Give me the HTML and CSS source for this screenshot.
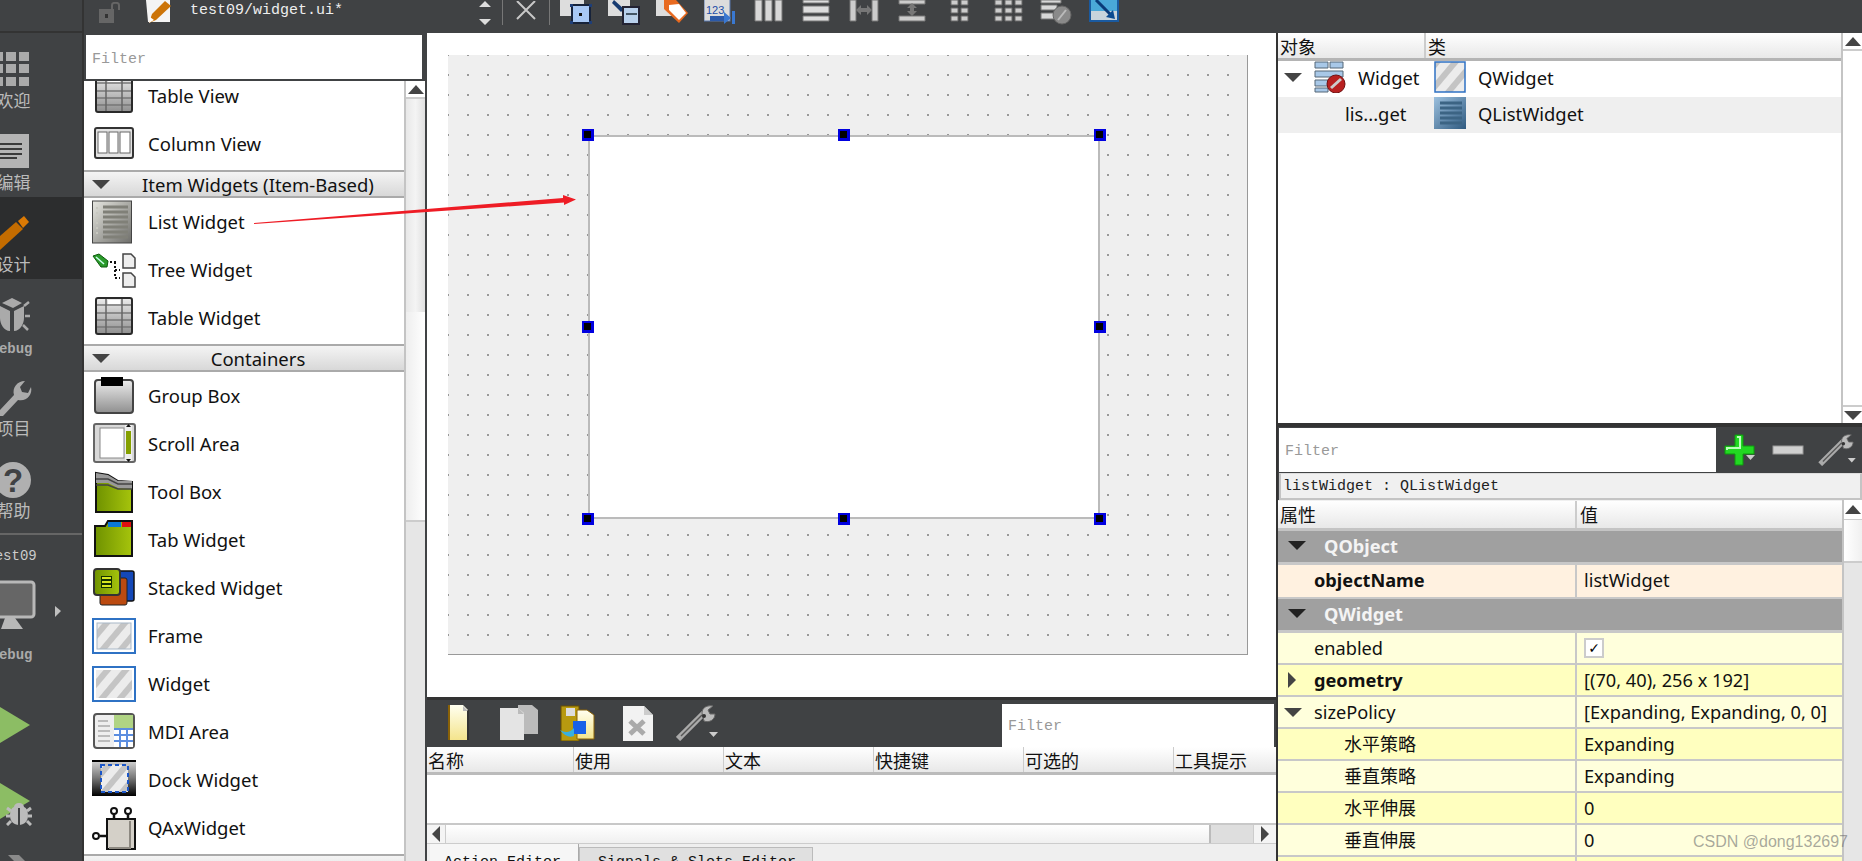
FILE: index.html
```html
<!DOCTYPE html>
<html lang="zh">
<head>
<meta charset="utf-8">
<title>Qt Designer</title>
<link rel="stylesheet" href="styles.css">
</head>
<body>
<svg class="defs" width="0" height="0">
  <defs>
    <linearGradient id="gGray" x1="0" y1="0" x2="0" y2="1"><stop offset="0" stop-color="#ececec"/><stop offset="1" stop-color="#8f8f8f"/></linearGradient>
    <linearGradient id="gList" x1="0" y1="0" x2="1" y2="1"><stop offset="0" stop-color="#e6e6e0"/><stop offset="1" stop-color="#6e6e6a"/></linearGradient>
    <linearGradient id="gGreen" x1="0" y1="0" x2="1" y2="0"><stop offset="0" stop-color="#6f9200"/><stop offset="1" stop-color="#a6c40c"/></linearGradient>
    <linearGradient id="gDock" x1="0" y1="0" x2="0" y2="1"><stop offset="0" stop-color="#d8d8d8"/><stop offset=".5" stop-color="#777"/><stop offset="1" stop-color="#000"/></linearGradient>
    <linearGradient id="gBlue" x1="0" y1="0" x2="1" y2="1"><stop offset="0" stop-color="#9cc0de"/><stop offset="1" stop-color="#2f5a80"/></linearGradient>
    <linearGradient id="gDoc" x1="0" y1="0" x2="0" y2="1"><stop offset="0" stop-color="#fffff0"/><stop offset="1" stop-color="#f4e48c"/></linearGradient>
    <pattern id="hatch" width="14" height="14" patternUnits="userSpaceOnUse" patternTransform="rotate(40)"><rect width="14" height="14" fill="#ececec"/><rect width="6" height="14" fill="#c4c4c4"/></pattern>

    <symbol id="i-table" viewBox="0 0 44 44"><rect x="4" y="2" width="36" height="36" rx="2" fill="url(#gGray)" stroke="#2a2a2a" stroke-width="2"/><path d="M5 9h34M5 17h34M5 24h34M5 31h34" stroke="#777" stroke-width="1.5"/><path d="M14 3v34M30 3v34" stroke="#666" stroke-width="1.5"/><rect x="16" y="4" width="12" height="4" fill="#fff"/></symbol>
    <symbol id="i-column" viewBox="0 0 44 44"><rect x="3" y="6" width="38" height="30" rx="2" fill="#e4e4e4" stroke="#333" stroke-width="2"/><rect x="6" y="10" width="9" height="21" fill="#fff" stroke="#666"/><rect x="17" y="10" width="9" height="21" fill="#fff" stroke="#666"/><rect x="28" y="10" width="10" height="21" fill="#fff" stroke="#666"/></symbol>
    <symbol id="i-list" viewBox="0 0 44 44"><rect x="0.5" y="1" width="39" height="42" fill="url(#gList)" stroke="#444"/><path d="M11 7h25M11 12h25M11 17h25M11 22h25M11 27h25M11 32h25M11 37h25" stroke="#808078" stroke-width="3"/><path d="M5 7v30" stroke="#c8c8c0" stroke-width="2" stroke-dasharray="2 3"/></symbol>
    <symbol id="i-tree" viewBox="0 0 44 44"><path d="M1 8l6-2 9 7-1 6-6 0z" fill="#2a9a2a" stroke="#0c5a0c"/><path d="M4 9l8 7" stroke="#cfe" stroke-width="1.5"/><path d="M18 14h7M23 14v16M23 22h5M23 30h5" stroke="#111" stroke-width="2" stroke-dasharray="2 2"/><path d="M31 6h8l4 4v10H31z" fill="#eee" stroke="#444" stroke-width="1.5"/><path d="M31 25h8l4 4v10H31z" fill="#eee" stroke="#444" stroke-width="1.5"/></symbol>
    <symbol id="i-group" viewBox="0 0 44 44"><rect x="3" y="6" width="38" height="33" rx="3" fill="url(#gGray)" stroke="#444" stroke-width="2"/><rect x="9" y="3" width="22" height="9" fill="#000"/></symbol>
    <symbol id="i-scroll" viewBox="0 0 44 44"><rect x="2" y="2" width="41" height="38" rx="2" fill="#d8d8d8" stroke="#666" stroke-width="2"/><rect x="8" y="6" width="24" height="30" fill="#fff" stroke="#888"/><rect x="33" y="3" width="7" height="36" fill="#eee"/><rect x="34" y="9" width="5" height="23" fill="#85a000"/><path d="M34 37h5l-2.5 3zM34 5h5l-2.5-3z" fill="#111"/></symbol>
    <symbol id="i-toolbox" viewBox="0 0 44 44"><path d="M4 3l12 2 10 6 14 1v30H4z" fill="url(#gGreen)" stroke="#111" stroke-width="2"/><path d="M4 3l12 2 10 6h14v8l-14-1-10-5H4z" fill="#999"/><path d="M4 9h12l10 5h14M4 15h12l10 4h14" stroke="#444" stroke-width="1.5" fill="none"/></symbol>
    <symbol id="i-tab" viewBox="0 0 44 44"><path d="M3 8h10l3-5h24v35H3z" fill="url(#gGreen)" stroke="#111" stroke-width="2"/><rect x="16" y="4" width="13" height="5" fill="#0a78d8"/><rect x="30" y="4" width="9" height="5" fill="#e01010"/></symbol>
    <symbol id="i-stack" viewBox="0 0 44 44"><rect x="24" y="5" width="18" height="30" rx="2" fill="#1448b8" stroke="#111" stroke-width="1.5"/><rect x="8" y="12" width="27" height="27" rx="2" fill="#bb4a10" stroke="#222"/><rect x="2" y="3" width="26" height="26" rx="3" fill="url(#gGreen)" stroke="#333" stroke-width="2"/><rect x="9" y="10" width="11" height="12" fill="#143000"/><path d="M10 12h9M10 16h9M10 20h9" stroke="#d8e820" stroke-width="2"/></symbol>
    <symbol id="i-frame" viewBox="0 0 44 44"><rect x="1" y="5" width="42" height="34" fill="#fff" stroke="#2f72c4" stroke-width="2"/><rect x="5" y="9" width="34" height="26" fill="url(#hatch)" stroke="#a8b8c8"/></symbol>
    <symbol id="i-widget" viewBox="0 0 44 44"><rect x="1" y="5" width="42" height="34" fill="#fff" stroke="#2f72c4" stroke-width="2"/><rect x="4" y="8" width="36" height="28" fill="url(#hatch)"/></symbol>
    <symbol id="i-mdi" viewBox="0 0 44 44"><rect x="2" y="4" width="40" height="34" rx="3" fill="#eee" stroke="#555" stroke-width="2"/><rect x="22" y="5" width="19" height="13" fill="#b0d484"/><rect x="22" y="19" width="19" height="18" fill="#fff"/><path d="M22 19h19M22 25h19M22 31h19M28 19v18M35 19v18" stroke="#5c8ee0" stroke-width="2"/><path d="M6 11h10M6 16h12M6 21h12M6 26h12M6 31h12" stroke="#aaa" stroke-width="1.5"/></symbol>
    <symbol id="i-dock" viewBox="0 0 44 44"><rect x="0" y="2" width="44" height="36" fill="url(#gDock)"/><rect x="0" y="2" width="44" height="2" fill="#000"/><rect x="9" y="7" width="27" height="27" fill="url(#hatch)"/><rect x="9" y="7" width="27" height="27" fill="none" stroke="#1a56c8" stroke-width="2" stroke-dasharray="4 3"/></symbol>
    <symbol id="i-qax" viewBox="0 0 44 44"><rect x="15" y="13" width="28" height="30" fill="#d4d0c8" stroke="#111" stroke-width="2"/><path d="M38 15v27H17" stroke="#8c8880" stroke-width="2" fill="none"/><circle cx="22" cy="5" r="3" fill="#fff" stroke="#111" stroke-width="2"/><circle cx="36" cy="5" r="3" fill="#fff" stroke="#111" stroke-width="2"/><path d="M22 8v5M36 8v5M8 30h7" stroke="#111" stroke-width="2.5"/><circle cx="4" cy="30" r="3" fill="#fff" stroke="#111" stroke-width="2"/></symbol>

    <symbol id="t-align1" viewBox="0 0 32 26"><rect x="0" y="-2" width="24" height="18" fill="#ddd"/><rect x="12" y="5" width="18" height="18" fill="#a8c8f4" stroke="#17233a" stroke-width="2"/><rect x="19" y="13" width="3" height="3" fill="#111"/><path d="M10 4h3v3h-3zM29 4h3v3h-3zM10 21h3v3h-3zM29 21h3v3h-3z" fill="#1e3e78"/></symbol>
    <symbol id="t-align2" viewBox="0 0 32 26"><rect x="0" y="-2" width="22" height="18" fill="#ddd"/><path d="M6 0l10 9-3 3-9-9z" fill="#163a70"/><rect x="15" y="7" width="16" height="17" fill="#b8d0ec" stroke="#223" stroke-width="2"/><rect x="18" y="13" width="11" height="2" fill="#456"/></symbol>
    <symbol id="t-align3" viewBox="0 0 32 26"><rect x="0" y="-2" width="20" height="18" fill="#ddd"/><path d="M8 0h12l12 13-9 10-15-14z" fill="#e86a20"/><path d="M13 5l10-1 7 9-7 7-10-10z" fill="#fff"/></symbol>
    <symbol id="t-num" viewBox="0 0 32 26"><rect x="0" y="-2" width="26" height="23" fill="#dcdcdc" stroke="#5878b0"/><text class="svg-num" x="2" y="14">123</text><rect x="6" y="16" width="16" height="5" fill="#2c5aa8"/><path d="M20 12l7 6-7 6z" fill="#3a78d0"/><rect x="28" y="11" width="3" height="13" fill="#3a78d0"/></symbol>
    <symbol id="t-cols" viewBox="0 0 32 26"><path d="M3 0h7v21H3zM13 0h7v21h-7zM23 0h7v21h-7z" fill="#d8d8d8" stroke="#777"/></symbol>
    <symbol id="t-rows" viewBox="0 0 32 26"><path d="M3 0h26v3H3zM3 6h26v7H3zM3 16h26v5H3z" fill="#ddd" stroke="#777"/></symbol>
    <symbol id="t-hsplit" viewBox="0 0 32 26"><path d="M2 0h6v21H2zM24 0h6v21h-6z" fill="#ccc" stroke="#777"/><path d="M8 10l5-5v3h6V5l5 5-5 5v-3h-6v3z" fill="#777"/></symbol>
    <symbol id="t-vsplit" viewBox="0 0 32 26"><path d="M3 0h26v4H3zM3 16h26v5H3z" fill="#ccc" stroke="#777"/><path d="M16 3l5 5h-3v3h3l-5 5-5-5h3V8h-3z" fill="#777"/></symbol>
    <symbol id="t-form" viewBox="0 0 32 26"><path d="M7 0h7v5H7zM17 0h7v5h-7zM7 8h7v5H7zM17 8h7v5h-7zM7 16h7v5H7zM17 16h7v5h-7z" fill="#ccc" stroke="#666"/></symbol>
    <symbol id="t-grid" viewBox="0 0 32 26"><path d="M3 0h7v5H3zM13 0h7v5h-7zM23 0h7v5h-7zM3 8h7v5H3zM13 8h7v5h-7zM23 8h7v5h-7zM3 16h7v5H3zM13 16h7v5h-7zM23 16h7v5h-7z" fill="#ccc" stroke="#666"/></symbol>
    <symbol id="t-break" viewBox="0 0 32 26"><path d="M1 0h20v3H1zM1 5h16v5H1zM1 13h14v6H1z" fill="#d8d8d8" stroke="#777"/><circle cx="22" cy="15" r="9" fill="#8a8a8a" stroke="#666"/><path d="M18 20l8-10" stroke="#bbb" stroke-width="2"/></symbol>
    <symbol id="t-adjust" viewBox="0 0 32 26"><rect x="2" y="-2" width="28" height="23" fill="#c8d4dc" stroke="#1a5aa0" stroke-width="2"/><rect x="3" y="-1" width="26" height="12" fill="#4aa8d8"/><path d="M8 0l17 17" stroke="#0a3a78" stroke-width="3"/><path d="M27 19l-9-2 7-7z" fill="#0a4a90"/></symbol>

    <symbol id="b-new" viewBox="0 0 36 36"><path d="M3 0h14l5 5v30H3z" fill="url(#gDoc)"/><path d="M3 0v35" stroke="#8a6208" stroke-width="2"/><path d="M22 5v30" stroke="#333" stroke-width="2"/><path d="M17 1v5h5z" fill="#bbb"/></symbol>
    <symbol id="b-copy" viewBox="0 0 44 36"><path d="M20 0h14l6 5v24H20z" fill="#bbb"/><path d="M2 3h18l6 5v27H2z" fill="#e4e4e4"/><path d="M20 3v6h6z" fill="#bbb"/></symbol>
    <symbol id="b-conn" viewBox="0 0 40 36"><rect x="2" y="1" width="18" height="35" fill="#b89a10" stroke="#6a5000"/><rect x="7" y="3" width="9" height="8" fill="#ddd"/><path d="M18 5h10l7 5v24H18z" fill="url(#gDoc)" stroke="#8a6208"/><rect x="14" y="16" width="13" height="13" fill="#1860e8"/><path d="M1 25q8 5 14-2v8q-7 3-14-6z" fill="#38b0e0"/></symbol>
    <symbol id="b-del" viewBox="0 0 34 36"><path d="M2 1h21l9 9v26H2z" fill="#f2f2f2"/><path d="M23 1v9h9z" fill="#ccc"/><path d="M9 16l14 13M23 16L9 29" stroke="#aaa" stroke-width="5"/></symbol>
    <symbol id="b-wrench" viewBox="0 0 44 36"><path d="M2 34L28 8" stroke="#aaa" stroke-width="6"/><path d="M5 31L26 10" stroke="#555" stroke-width="1.5"/><path d="M26 8c0-6 6-8 11-7l-5 4 2 4 5 0c0 6-6 9-11 7z" fill="#bbb" stroke="#666"/><circle cx="28" cy="11" r="2" fill="#333"/><path d="M33 27h9l-4.500 5z" fill="#ccc"/></symbol>
    <symbol id="b-plus" viewBox="0 0 32 32"><path d="M11 1h8v11h11v8H19v11h-8V20H1v-8h10z" fill="#22d822" stroke="#0c9a0c"/><path d="M13 3h3v11H3v2" stroke="#baffba" stroke-width="2" fill="none"/><path d="M22 21h9l-4.500 5z" fill="#ccc"/></symbol>
    <symbol id="b-minus" viewBox="0 0 32 32"><rect x="1" y="12" width="30" height="8" fill="#d0d0d0" stroke="#999"/></symbol>
    <symbol id="b-bug" viewBox="0 0 26 24"><path d="M13 1c3 0 5 2 5 4 3 1 4 5 4 9 0 5-4 9-9 9s-9-4-9-9c0-4 1-8 4-9 0-2 2-4 5-4z" fill="#bbb"/><path d="M13 6v17" stroke="#404244" stroke-width="2"/><path d="M5 9L1 6M4 14H0M5 19l-4 4M21 9l4-3M22 14h4M21 19l4 4" stroke="#bbb" stroke-width="3"/></symbol>
  </defs>
</svg>

<div class="app">
  <aside class="rail">
    <div class="rail-top"></div>
    <div class="rail-item">
      <svg class="rail-icon" viewBox="0 0 83 34"><path d="M-7 0h10v9H-7zM6 0h10v9H6zM19 0h10v9H19zM-7 12h10v9H-7zM6 12h10v9H6zM19 12h10v9H19zM-7 25h10v9H-7zM6 25h10v9H6zM19 25h10v9H19z" fill="#aaa"/></svg>
      <span class="rail-label">欢迎</span>
    </div>
    <div class="rail-item">
      <svg class="rail-icon" viewBox="0 0 83 34"><rect x="0" y="0" width="29" height="34" fill="#b4b4b4"/><path d="M0 10h22M0 15h22M0 20h22M0 24h17" stroke="#3a3a3a" stroke-width="2"/></svg>
      <span class="rail-label">编辑</span>
    </div>
    <div class="rail-item is-active">
      <svg class="rail-icon" viewBox="0 0 83 34"><path d="M0 20L16 6l7 7L0 34z" fill="#c46c00"/><path d="M18 5l6-5 5 6-6 6z" fill="#dc7a04"/></svg>
      <span class="rail-label">设计</span>
    </div>
    <div class="rail-item">
      <svg class="rail-icon" viewBox="0 0 83 34"><path d="M12 0l10 5-9 5L2 5z" fill="#aaa"/><path d="M0 8l10 5v20C4 33 0 26 0 20zM24 8l-10 5v20c6 0 10-7 10-13z" fill="#aaa"/><path d="M24 8l5-4M25 18h5M23 27l5 5" stroke="#aaa" stroke-width="2.500"/></svg>
      <span class="rail-label rail-latin">Debug</span>
    </div>
    <div class="rail-item">
      <svg class="rail-icon" viewBox="0 0 83 40"><path d="M0 30L14 15c-2-7 3-14 11-14l-5 6 2 5 6 1 3-6c2 8-5 15-13 13L3 36H0z" fill="#aaa"/></svg>
      <span class="rail-label rail-label-low">项目</span>
    </div>
    <div class="rail-item">
      <svg class="rail-icon" viewBox="0 0 83 37"><circle cx="13" cy="18" r="18" fill="#b0b0b0"/><text class="svg-help" x="13" y="30" text-anchor="middle">?</text></svg>
      <span class="rail-label rail-label-help">帮助</span>
    </div>
    <div class="rail-sep"></div>
    <span class="rail-label rail-latin rail-project">test09</span>
    <div class="rail-kit">
      <svg class="rail-monitor" viewBox="0 0 83 50"><rect x="-10" y="2" width="44" height="35" rx="3" fill="#666" stroke="#b8b8b8" stroke-width="3"/><path d="M5 38h10l8 11H1z" fill="#b8b8b8"/><path d="M55 26l6 5-6 6z" fill="#c0c0c0"/></svg>
      <span class="rail-label rail-latin rail-kit-label">Debug</span>
    </div>
    <div class="rail-runs">
      <svg class="rail-run" viewBox="0 0 83 36"><path d="M0 0l30 18L0 36z" fill="#8cbd64"/></svg>
      <div class="rail-run-debug">
        <svg class="rail-run" viewBox="0 0 83 36"><path d="M0 0l30 18L0 36z" fill="#8cbd64"/></svg>
        <svg class="rail-run-bug"><use href="#b-bug"/></svg>
      </div>
      <svg class="rail-build" viewBox="0 0 83 8"><path d="M8 0h11l8 8H16z" fill="#8a8a8a"/></svg>
    </div>
  </aside>

  <div class="main">
    <header class="topbar">
      <svg class="lock" viewBox="0 0 26 22"><rect x="1" y="7" width="15" height="14" fill="#666"/><rect x="7" y="12" width="3" height="4" fill="#333"/><path d="M14 7V3c0-3 7-3 7 0v5" fill="none" stroke="#666" stroke-width="2"/></svg>
      <svg class="edit-doc" viewBox="0 0 28 25"><path d="M1 0h24v22H3z" fill="#f4f4f4"/><path d="M4 23l3-9L20 1l6 5L11 20z" fill="#cc7408"/><path d="M4 23l1-6 4 3z" fill="#fff"/></svg>
      <span class="doc-title">test09/widget.ui*</span>
      <svg class="updown" viewBox="0 0 14 26"><path d="M7 1l6 6H1zM7 25l6-6H1z" fill="#ddd"/><path d="M1 9h12M1 17h12" stroke="#404244"/></svg>
      <span class="tb-sep"></span>
      <svg class="close-x" viewBox="0 0 20 20"><path d="M1 0l18 18M19 0L1 18" stroke="#c8c8c8" stroke-width="2"/></svg>
      <span class="tb-sep"></span>
      <div class="tools">
        <svg class="tool"><use href="#t-align1"/></svg>
        <svg class="tool"><use href="#t-align2"/></svg>
        <svg class="tool"><use href="#t-align3"/></svg>
        <svg class="tool"><use href="#t-num"/></svg>
        <svg class="tool"><use href="#t-cols"/></svg>
        <svg class="tool"><use href="#t-rows"/></svg>
        <svg class="tool"><use href="#t-hsplit"/></svg>
        <svg class="tool"><use href="#t-vsplit"/></svg>
        <svg class="tool"><use href="#t-form"/></svg>
        <svg class="tool"><use href="#t-grid"/></svg>
        <svg class="tool"><use href="#t-break"/></svg>
        <svg class="tool"><use href="#t-adjust"/></svg>
      </div>
    </header>

    <div class="workspace">
      <section class="widgetbox">
        <div class="wb-filter"><span class="filter">Filter</span></div>
        <div class="wb-body">
          <div class="wb-list">
            <div class="wb-scroll">
              <div class="wb-row"><svg class="wb-icon"><use href="#i-table"/></svg>Table View</div>
              <div class="wb-row"><svg class="wb-icon"><use href="#i-column"/></svg>Column View</div>
              <div class="wb-head"><i class="tri-down"></i><span>Item Widgets (Item-Based)</span></div>
              <div class="wb-row"><svg class="wb-icon"><use href="#i-list"/></svg>List Widget</div>
              <div class="wb-row"><svg class="wb-icon"><use href="#i-tree"/></svg>Tree Widget</div>
              <div class="wb-row"><svg class="wb-icon"><use href="#i-table"/></svg>Table Widget</div>
              <div class="wb-head"><i class="tri-down"></i><span>Containers</span></div>
              <div class="wb-row"><svg class="wb-icon"><use href="#i-group"/></svg>Group Box</div>
              <div class="wb-row"><svg class="wb-icon"><use href="#i-scroll"/></svg>Scroll Area</div>
              <div class="wb-row"><svg class="wb-icon"><use href="#i-toolbox"/></svg>Tool Box</div>
              <div class="wb-row"><svg class="wb-icon"><use href="#i-tab"/></svg>Tab Widget</div>
              <div class="wb-row"><svg class="wb-icon"><use href="#i-stack"/></svg>Stacked Widget</div>
              <div class="wb-row"><svg class="wb-icon"><use href="#i-frame"/></svg>Frame</div>
              <div class="wb-row"><svg class="wb-icon"><use href="#i-widget"/></svg>Widget</div>
              <div class="wb-row"><svg class="wb-icon"><use href="#i-mdi"/></svg>MDI Area</div>
              <div class="wb-row"><svg class="wb-icon"><use href="#i-dock"/></svg>Dock Widget</div>
              <div class="wb-row"><svg class="wb-icon"><use href="#i-qax"/></svg>QAxWidget</div>
              <div class="wb-head"></div>
            </div>
          </div>
          <div class="vscroll wb-vscroll">
            <div class="arrow-btn"><i class="tri-up"></i></div>
            <div class="vthumb"></div>
            <div class="vpage"></div>
            <div class="vtrack"></div>
          </div>
        </div>
      </section>

      <section class="center">
        <div class="canvas">
          <div class="form">
            <div class="placed">
              <i class="handle h-nw"></i><i class="handle h-n"></i><i class="handle h-ne"></i>
              <i class="handle h-w"></i><i class="handle h-e"></i>
              <i class="handle h-sw"></i><i class="handle h-s"></i><i class="handle h-se"></i>
            </div>
          </div>
        </div>
        <div class="action-bar">
          <svg class="act act-new"><use href="#b-new"/></svg>
          <svg class="act act-copy"><use href="#b-copy"/></svg>
          <svg class="act act-conn"><use href="#b-conn"/></svg>
          <svg class="act act-del"><use href="#b-del"/></svg>
          <svg class="act act-wrench"><use href="#b-wrench"/></svg>
          <div class="action-filter"><span class="filter">Filter</span></div>
        </div>
        <div class="action-head">
          <span>名称</span><span>使用</span><span>文本</span><span>快捷键</span><span>可选的</span><span>工具提示</span>
        </div>
        <div class="action-list"></div>
        <div class="hscroll">
          <div class="h-btn"><i class="tri-left"></i></div>
          <div class="h-thumb"></div>
          <div class="h-track"></div>
          <div class="h-btn h-btn-end"><i class="tri-right"></i></div>
        </div>
        <div class="tabs">
          <span class="tab tab-on">Action Editor</span>
          <span class="tab tab-off">Signals &amp; Slots Editor</span>
        </div>
      </section>

      <section class="right">
        <div class="inspector">
          <div class="insp-main">
            <div class="insp-head"><span class="ih-a">对象</span><span class="ih-b">类</span></div>
            <div class="tree-row">
              <div class="tree-name"><i class="tri-down tree-tri"></i>
                <svg class="tree-icon" viewBox="0 0 32 32"><path d="M1 1h13v6H1zM16 1h13v6H16zM1 10h28v6H1zM1 19h13v6H1zM1 27h13v4H1z" fill="#a8c8e8" stroke="#567"/><circle cx="22" cy="23" r="9" fill="#b82020" stroke="#701010"/><path d="M17 27l10-9" stroke="#ccc" stroke-width="3"/></svg>
                <span class="tree-label">Widget</span></div>
              <div class="tree-class"><svg class="class-icon" viewBox="0 0 32 32"><rect x="1" y="1" width="30" height="30" fill="url(#hatch)" stroke="#2f72c4" stroke-width="1.500"/></svg>QWidget</div>
            </div>
            <div class="tree-row tree-row-alt">
              <div class="tree-name tree-child">lis...get</div>
              <div class="tree-class"><svg class="class-icon" viewBox="0 0 32 32"><rect x="0" y="0" width="32" height="32" fill="url(#gBlue)"/><path d="M6 6h22M6 11h22M6 16h22M6 21h22M6 26h22" stroke="#3c6484" stroke-width="3"/></svg>QListWidget</div>
            </div>
          </div>
          <div class="vscroll insp-vscroll">
            <div class="arrow-btn"><i class="tri-up"></i></div>
            <div class="vspace"></div>
            <div class="arrow-btn"><i class="tri-down"></i></div>
          </div>
        </div>

        <div class="prop-filter">
          <div class="prop-input"><span class="filter">Filter</span></div>
          <svg class="pf-btn pf-plus"><use href="#b-plus"/></svg>
          <svg class="pf-btn pf-minus"><use href="#b-minus"/></svg>
          <svg class="pf-btn pf-wrench"><use href="#b-wrench"/></svg>
        </div>
        <div class="obj-label">listWidget : QListWidget</div>

        <div class="props">
          <div class="props-main">
            <div class="prop-head"><span class="ph-a">属性</span><span class="ph-b">值</span></div>
            <div class="pgroup"><i class="tri-down tri-dark"></i>QObject</div>
            <div class="prow tall peach"><div class="pk"><b>objectName</b></div><div class="pv">listWidget</div></div>
            <div class="pgroup"><i class="tri-down tri-dark"></i>QWidget</div>
            <div class="prow y1"><div class="pk">enabled</div><div class="pv"><span class="check">✓</span></div></div>
            <div class="prow y2"><div class="pk"><i class="tri-right tri-exp"></i><b>geometry</b></div><div class="pv">[(70, 40), 256 x 192]</div></div>
            <div class="prow y1"><div class="pk"><i class="tri-down tri-exp2"></i>sizePolicy</div><div class="pv">[Expanding, Expanding, 0, 0]</div></div>
            <div class="prow y2"><div class="pk sub">水平策略</div><div class="pv">Expanding</div></div>
            <div class="prow y1"><div class="pk sub">垂直策略</div><div class="pv">Expanding</div></div>
            <div class="prow y2"><div class="pk sub">水平伸展</div><div class="pv">0</div></div>
            <div class="prow y1"><div class="pk sub">垂直伸展</div><div class="pv">0</div></div>
            <div class="prow y2"><div class="pk"></div><div class="pv"></div></div>
          </div>
          <div class="vscroll props-vscroll">
            <div class="arrow-btn"><i class="tri-up"></i></div>
            <div class="vthumb-short"></div>
            <div class="vtrack"></div>
          </div>
        </div>
      </section>
    </div>
  </div>

  <svg class="annotation" viewBox="0 0 1862 861"><path d="M254 223L563 198 563 195 576 199.500 564 205 564 202.500 254 224z" fill="#ee1c25"/></svg>
  <span class="watermark">CSDN @dong132697</span>
</div>
</body>
</html>
```
FILE: styles.css
```css
* { box-sizing: border-box; }
html, body { margin: 0; height: 100%; overflow: hidden; }
body { font-family: "Noto Sans", "Noto Sans CJK SC", sans-serif; color: #111; background: #404244; }
i { display: block; }
.defs { display: block; }
.app { position: relative; display: flex; width: 1862px; height: 861px; overflow: hidden; background: #404244; }

/* triangles */
.tri-down, .tri-up, .tri-left, .tri-right { width: 0; height: 0; flex: none; }
.tri-down { border-left: 9px solid transparent; border-right: 9px solid transparent; border-top: 9px solid #444; }
.tri-up { border-left: 8px solid transparent; border-right: 8px solid transparent; border-bottom: 9px solid #444; }
.tri-left { border-top: 8px solid transparent; border-bottom: 8px solid transparent; border-right: 8px solid #444; }
.tri-right { border-top: 8px solid transparent; border-bottom: 8px solid transparent; border-left: 8px solid #444; }

/* left rail */
.rail { width: 84px; flex: none; height: 861px; overflow: hidden; border-right: 2px solid #333; display: flex; flex-direction: column; background: #404244; }
.rail-top { height: 33px; flex: none; border-bottom: 2px solid #333; }
.rail-item { height: 82px; flex: none; padding-top: 19px; display: flex; flex-direction: column; align-items: flex-start; }
.rail-item.is-active { background: #2c2d2e; }
.rail-icon { width: 83px; height: 34px; flex: none; display: block; overflow: visible; }
.rail-label { width: 27px; display: flex; justify-content: center; white-space: nowrap; font-size: 17px; line-height: 20px; color: #bbb; margin-top: 5px; flex: none; }
.rail-label-low { margin-top: -1px; }
.rail-label-help { margin-top: 2px; }
.rail-latin { width: 23px; margin-top: 7px; font-family: "Liberation Mono", monospace; font-size: 14px; font-weight: 700; color: #aaa; }
.rail-item:nth-child(6) .rail-icon { height: 40px; }
.rail-item:nth-child(7) .rail-icon { height: 37px; }
.rail-sep { height: 2px; flex: none; margin-top: 8px; background: #666; }
.rail-project { margin-top: 11px; font-weight: 400; color: #ccc; }
.rail-kit { margin-top: 14px; display: flex; flex-direction: column; flex: none; }
.rail-monitor { width: 83px; height: 50px; display: block; flex: none; overflow: visible; }
.rail-kit-label { margin-top: 15px; }
.rail-runs { display: flex; flex-direction: column; flex: none; margin-top: 42px; }
.rail-run { width: 83px; height: 36px; display: block; overflow: visible; flex: none; }
.rail-run-debug { position: relative; margin-top: 40px; flex: none; }
.rail-run-bug { position: absolute; left: 6px; top: 19px; width: 26px; height: 24px; }
.rail-build { width: 83px; height: 8px; display: block; margin-top: 36px; flex: none; }
.svg-help { font-family: "Liberation Sans", sans-serif; font-weight: 700; font-size: 33px; fill: #404244; }

/* top toolbar */
.main { flex: 1; min-width: 0; display: flex; flex-direction: column; }
.topbar { height: 33px; flex: none; display: flex; align-items: flex-start; padding-left: 14px; background: #404244; }
.lock { width: 26px; height: 22px; margin-top: 2px; flex: none; }
.edit-doc { width: 28px; height: 25px; margin-left: 21px; flex: none; }
.doc-title { margin: 1px 0 0 17px; width: 288px; flex: none; font-family: "Liberation Mono", monospace; font-size: 15px; line-height: 20px; color: #eee; }
.updown { width: 14px; height: 26px; flex: none; }
.tb-sep { width: 1px; height: 25px; flex: none; background: #777; margin-left: 10px; }
.close-x { width: 20px; height: 20px; flex: none; margin-left: 13px; margin-top: 1px; }
.close-x + .tb-sep { margin-left: 13px; }
.tools { display: flex; gap: 16px; margin-left: 10px; flex: none; }
.tool { width: 32px; height: 26px; flex: none; display: block; }
.svg-num { font-family: "Liberation Sans", sans-serif; font-size: 11px; fill: #1c4ea8; }

/* workspace */
.workspace { flex: 1; min-height: 0; display: flex; }
.filter { font-family: "Liberation Mono", monospace; font-size: 15px; color: #999; }

/* widget box */
.widgetbox { width: 341px; flex: none; display: flex; flex-direction: column; }
.wb-filter { height: 44px; flex: none; margin: 2px 3px 2px 2px; padding: 4px 0 0 6px; background: #fff; display: flex; align-items: center; }
.wb-body { flex: 1; min-height: 0; display: flex; }
.wb-list { width: 320px; flex: none; background: #fff; overflow: hidden; }
.wb-scroll { margin-top: -9px; }
.wb-row { height: 48px; display: flex; align-items: center; gap: 12px; padding: 0 0 2px 8px; font-size: 18.5px; color: #111; }
.wb-icon { width: 44px; height: 44px; flex: none; margin-top: 2px; }
.wb-head { height: 28px; margin: 2px 0 0; display: flex; align-items: center; padding-left: 8px; border-top: 2px solid #aaa; border-bottom: 2px solid #aaa; background: linear-gradient(#f4f4f4, #d8d8d8); font-size: 18.5px; }
.wb-head span { flex: 1; text-align: center; margin-left: 2px; }

/* scrollbars */
.vscroll { display: flex; flex-direction: column; flex: none; background: #fff; border-left: 2px solid #c4c4c4; }
.wb-vscroll { width: 21px; }
.arrow-btn { height: 18px; flex: none; display: flex; align-items: center; justify-content: center; border-bottom: 2px solid #ccc; }
.vthumb { height: 213px; flex: none; background: linear-gradient(90deg, #e8e8e8, #f4f4f4, #e0e0e0); }
.vpage { height: 210px; flex: none; background: linear-gradient(90deg, #eee, #fff); border-bottom: 2px solid #ccc; }
.vtrack { flex: 1; background: #e6e6e6; }
.vspace { flex: 1; background: #fff; }
.vthumb-short { height: 43px; flex: none; background: linear-gradient(90deg, #fff, #f0f0f0); border-bottom: 2px solid #ccc; }

/* center */
.center { width: 851px; flex: none; margin-left: 2px; border-right: 2px solid #333; display: flex; flex-direction: column; background: #fff; }
.canvas { height: 664px; flex: none; padding: 22px 0 0 21px; background: #fff; }
.form { position: relative; width: 800px; height: 600px; background-color: #efefef; background-image: radial-gradient(circle at 1px 1px, #999 1px, transparent 1.3px); background-size: 20px 20px; background-position: -1px -1px; border-right: 1px solid #999; border-bottom: 1px solid #999; }
.placed { position: absolute; left: 140px; top: 80px; width: 512px; height: 384px; background: #fff; border: 2px solid #bbb; }
.handle { position: absolute; width: 12px; height: 12px; background: #000; border: 2px solid #0000e0; border-right-width: 3px; border-bottom-width: 3px; }
.h-nw { left: -8px; top: -8px; }
.h-n { left: 248px; top: -8px; }
.h-ne { left: 504px; top: -8px; }
.h-w { left: -8px; top: 184px; }
.h-e { left: 504px; top: 184px; }
.h-sw { left: -8px; top: 376px; }
.h-s { left: 248px; top: 376px; }
.h-se { left: 504px; top: 376px; }

.action-bar { height: 50px; flex: none; display: flex; align-items: flex-start; padding-top: 5px; background: #404244; border-top: 3px solid #333; }
.act { height: 36px; flex: none; display: block; }
.act-new { width: 36px; margin-left: 19px; }
.act-copy { width: 44px; margin-left: 16px; }
.act-conn { width: 40px; margin-left: 17px; }
.act-del { width: 34px; margin-left: 22px; }
.act-wrench { width: 44px; margin-left: 21px; }
.action-filter { width: 272px; height: 44px; margin: -1px 2px 0 auto; background: #fff; padding-left: 6px; display: flex; align-items: center; }
.action-head { height: 28px; flex: none; display: grid; grid-template-columns: 147px repeat(5, 150px); background: linear-gradient(#fff, #e8e8e8); border-bottom: 3px solid #bbb; font-size: 18px; line-height: 29px; }
.action-head span { padding-left: 1px; border-right: 1px solid #ccc; white-space: nowrap; overflow: hidden; }
.action-list { height: 50px; flex: none; background: #fff; border-bottom: 2px solid #c8c8c8; }
.hscroll { height: 19px; flex: none; display: flex; background: #f4f4f4; border-bottom: 1px solid #ccc; }
.h-btn { width: 19px; flex: none; display: flex; align-items: center; justify-content: center; border-right: 1px solid #ccc; }
.h-btn-end { width: 22px; border-right: 0; }
.h-thumb { width: 765px; flex: none; background: linear-gradient(#fff, #f0f0f0); border-right: 2px solid #bbb; }
.h-track { flex: 1; background: #dedede; border-right: 1px solid #ccc; }
.tabs { flex: 1; min-height: 0; display: flex; align-items: flex-start; background: #efefef; overflow: hidden; padding-left: 3px; }
.tab { font-family: "Liberation Mono", monospace; font-size: 15px; line-height: 18px; white-space: nowrap; height: 20px; overflow: hidden; }
.tab-on { width: 149px; background: #f6f6f6; padding: 10px 0 0 14px; border-right: 1px solid #aaa; }
.tab-off { width: 234px; margin-top: 3px; padding: 6px 0 0 18px; background: #e0e0e0; border: 1px solid #bbb; border-bottom: 0; }

/* right */
.right { flex: 1; min-width: 0; display: flex; flex-direction: column; }
.inspector { height: 390px; flex: none; display: flex; background: #fff; }
.insp-main { flex: 1; min-width: 0; }
.insp-head { height: 28px; display: flex; background: linear-gradient(#fff, #e8e8e8); border-bottom: 3px solid #b4b4b4; font-size: 18px; line-height: 29px; }
.ih-a { width: 148px; border-right: 2px solid #ccc; padding-left: 2px; }
.ih-b { padding-left: 2px; }
.tree-row { height: 36px; display: flex; align-items: center; padding-bottom: 4px; font-size: 18.4px; }
.tree-row-alt { background: #efefef; }
.tree-name { width: 156px; flex: none; display: flex; align-items: center; }
.tree-tri { margin-left: 6px; }
.tree-icon { width: 32px; height: 32px; flex: none; margin-left: 12px; }
.tree-label { margin-left: 12px; }
.tree-child { padding-left: 67px; }
.tree-class { display: flex; align-items: center; gap: 12px; }
.class-icon { width: 32px; height: 32px; flex: none; }
.insp-vscroll { width: 21px; }
.insp-vscroll .arrow-btn:last-child { border-bottom: 0; border-top: 2px solid #ccc; }

.prop-filter { height: 50px; flex: none; display: flex; align-items: center; padding-left: 1px; border-top: 4px solid #333; background: #404244; }
.prop-input { width: 437px; height: 44px; flex: none; background: #fff; padding: 2px 0 0 6px; display: flex; align-items: center; }
.pf-btn { flex: none; display: block; }
.pf-plus { width: 32px; height: 32px; margin-left: 8px; }
.pf-minus { width: 32px; height: 32px; margin-left: 16px; }
.pf-wrench { width: 40px; height: 32px; margin-left: 14px; }
.obj-label { height: 27px; flex: none; margin: 0 0 0 1px; padding-left: 2px; background: #f0f0f0; border: 2px solid #c4c4c4; border-top: 1px solid #ddd; font-family: "Liberation Mono", monospace; font-size: 15px; line-height: 26px; color: #222; }

.props { flex: 1; min-height: 0; display: flex; background: #f0f0f0; overflow: hidden; }
.props-main { flex: 1; min-width: 0; }
.prop-head { height: 30px; margin-top: 1px; display: flex; background: linear-gradient(#fff, #e8e8e8); border-bottom: 3px solid #c4c4c4; font-size: 18px; line-height: 29px; }
.ph-a { width: 299px; padding-left: 2px; border-right: 2px solid #ccc; }
.ph-b { padding-left: 3px; }
.pgroup { height: 34px; display: flex; align-items: center; padding: 0 0 2px 10px; background: #a0a0a0; border-bottom: 3px solid #c8c8c8; font-size: 18.2px; font-weight: 700; color: #f4f4f4; }
.tri-dark { margin-right: 18px; border-top-color: #222; }
.prow { height: 32px; display: flex; border-bottom: 2px solid #c8c8c8; font-size: 18.2px; line-height: 30px; }
.prow.tall { height: 34px; padding-bottom: 0; }
.prow.tall .pk, .prow.tall .pv { padding-bottom: 2px; }
.peach { background: #fff1e0; }
.y1 { background: #ffffdc; }
.y2 { background: #ffffbf; }
.pk { width: 299px; flex: none; padding-left: 36px; border-right: 2px solid #c8c8c8; position: relative; display: flex; align-items: center; }
.pk.sub { padding-left: 66px; font-size: 18px; }
.pv { padding-left: 7px; display: flex; align-items: center; white-space: nowrap; }
.check { width: 20px; height: 20px; background: #fff; border: 2px solid #ccc; font-family: "DejaVu Sans", sans-serif; font-size: 14px; font-weight: 700; line-height: 16px; text-align: center; color: #000; }
.tri-exp { position: absolute; left: 10px; top: 7px; }
.tri-exp2 { position: absolute; left: 6px; top: 11px; }
.props-vscroll { width: 20px; }
.props-vscroll .arrow-btn { height: 20px; border-bottom: 1px solid #ccc; }

/* overlays */
.annotation { position: absolute; left: 0; top: 0; width: 1862px; height: 861px; pointer-events: none; }
.watermark { position: absolute; left: 1693px; top: 832px; font-family: "Liberation Sans", sans-serif; font-size: 16px; line-height: 20px; color: rgba(110, 110, 110, 0.6); white-space: nowrap; }
```
